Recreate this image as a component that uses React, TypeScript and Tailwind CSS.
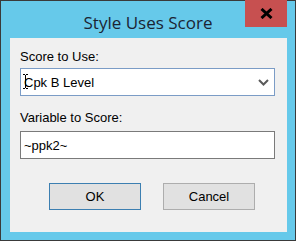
import React from "react";

export default function App() {
  return (
    <div className="w-[296px] h-[241px] border border-[#3a3a3a] bg-[#66c9ea] flex flex-col relative" style={{ fontFamily: '"Liberation Sans", Arial, sans-serif' }}>
      <div className="h-[37px] flex items-center justify-center shrink-0">
        <span className="text-[17px] text-[#1b2433] pt-[6px]" style={{ fontFamily: '"Open Sans", "Noto Sans", sans-serif' }}>
          Style Uses Score
        </span>
      </div>
      <div className="absolute top-[-1px] right-[8px] w-[42px] h-[27px] bg-[#c75050] flex items-center justify-center">
        <svg width="13" height="11" viewBox="0 0 13 11">
          <path d="M1.5 1 L11.5 10 M11.5 1 L1.5 10" stroke="#000" strokeWidth="3" fill="none" />
        </svg>
      </div>
      <div className="ml-[9px] mr-[8px] h-[194px] bg-[#f0f0f0] flex flex-col pl-[10px] pr-[12px] pt-[11px] text-[13px] text-black leading-[15px]">
        <div>Score to Use:</div>
        <div className="mt-[4px] h-[28px] border border-[#7b9cc6] bg-white flex items-center pl-[3px] pr-[5px] relative">
          <span className="flex-1">Cpk B Level</span>
          <svg width="11" height="7" viewBox="0 0 11 7">
            <path d="M1 1 L5.5 5.5 L10 1" stroke="#5a5a5a" strokeWidth="2" fill="none" />
          </svg>
          <svg className="absolute left-[2px] top-[5px]" width="5" height="15" viewBox="0 0 5 15">
            <path d="M0 0.5 H2 M3 0.5 H5 M2.5 1 V14 M0 14.5 H2 M3 14.5 H5" stroke="#000" strokeWidth="1" fill="none" />
          </svg>
        </div>
        <div className="mt-[14px]">Variable to Score:</div>
        <div className="mt-[6px] h-[28px] border border-[#7a7a7a] bg-white flex items-center pl-[3px]">
          <span>~ppk2~</span>
        </div>
        <div className="mt-[24px] flex gap-[22px] pl-[29px]">
          <div className="w-[92px] h-[27px] border border-[#3c7fb1] bg-[#e1e1e1] flex items-center justify-center">OK</div>
          <div className="w-[92px] h-[27px] border border-[#adadad] bg-[#e1e1e1] flex items-center justify-center">Cancel</div>
        </div>
      </div>
    </div>
  );
}
